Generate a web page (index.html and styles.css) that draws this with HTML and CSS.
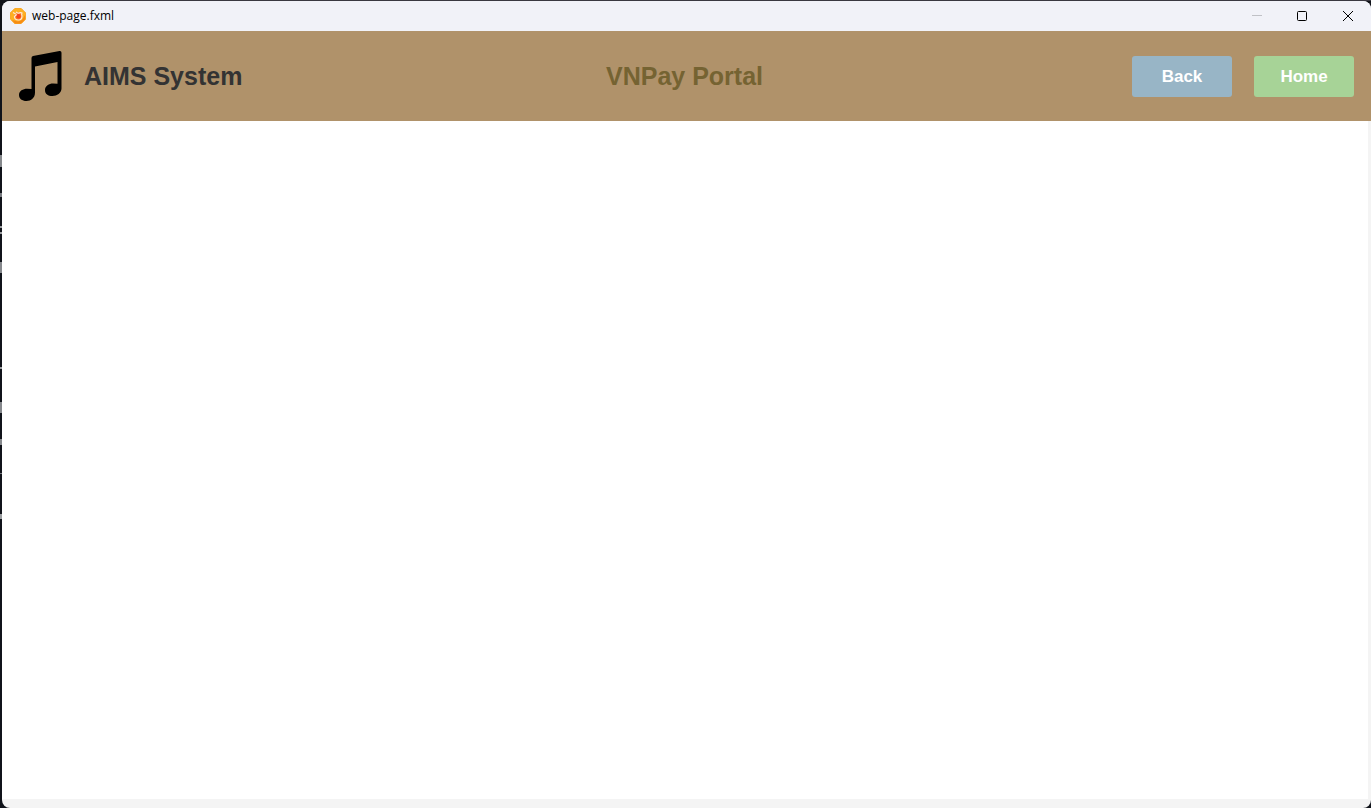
FILE: index.html
```html
<!DOCTYPE html>
<html lang="en">
<head>
<meta charset="utf-8">
<meta name="viewport" content="width=device-width, initial-scale=1">
<title>web-page.fxml</title>
<link rel="stylesheet" href="styles.css">
</head>
<body>
<div class="window">
  <div class="titlebar">
    <svg class="app-icon" viewBox="0 0 16 16" aria-hidden="true">
      <path d="M5 0.3h6L15.7 5v6L11 15.7H5L0.3 11V5z" fill="#fdb022" stroke="#fba21b" stroke-linejoin="round"/>
      <path d="M2 12l3 3.500h6l4-4V7l-3 5-4 1.500z" fill="#f78c14"/>
      <circle cx="8.300" cy="8.300" r="4" fill="#fb7a1c"/>
      <circle cx="8.500" cy="8.300" r="2.200" fill="#f4401e"/>
      <path d="M3 4.500L6.500 6.500M6 4l2 1.200Q11 4 12 5Q11.300 6 12 8Q12 12 8.500 12Q4.500 12 4.500 8.500L6.500 6.500" fill="none" stroke="#ffe8d8" stroke-width="1.200"/>
    </svg>
    <span class="window-title">web-page.fxml</span>
    <div class="window-controls">
      <button class="control minimize" aria-label="Minimize" disabled><svg viewBox="0 0 12 12"><path d="M2 5.500h10"/></svg></button>
      <button class="control" aria-label="Maximize"><svg viewBox="0 0 12 12"><rect x="1.500" y="1.500" width="9" height="9" rx="1"/></svg></button>
      <button class="control" aria-label="Close"><svg viewBox="0 0 12 12"><path d="M1 1l10 10M11 1L1 11"/></svg></button>
    </div>
  </div>
  <header class="header">
    <div class="brand">
      <svg class="logo" viewBox="0 0 44 52" aria-hidden="true">
        <path d="M12.500 8Q12.500 6.300 14 6L40.500 1Q42.500 0.700 42.500 2.700V38.500C42.500 43 38 46 33.500 46C29 46 26 44 26 40C26 36 30 33.500 34 33.500L38.500 33.800V12L16 16.500V42.500C16 48 12 51 7.500 51C3 51 0 48.800 0 45C0 41 4 38.800 8 38.800L12.500 39Z"/>
      </svg>
      <span class="brand-name">AIMS System</span>
    </div>
    <h1 class="page-title">VNPay Portal</h1>
    <nav class="actions">
      <button class="button back">Back</button>
      <button class="button home">Home</button>
    </nav>
  </header>
  <main class="content"><div class="web-view"></div></main>
</div>
</body>
</html>
```
FILE: styles.css
```css
* {
  box-sizing: border-box;
}

body {
  display: flex;
  min-height: 100vh;
  margin: 0;
  padding: 1px 0 0 2px;
  font-family: "Liberation Sans", Arial, sans-serif;
  background-color: #10131a;
  background-image:
    linear-gradient(#3a3840, #3a3840),
    linear-gradient(to bottom,
      transparent 155px, #85888c 155px 167px, transparent 167px 193px,
      #777a80 193px 197px, transparent 197px 226px, #9a9da0 226px 228px,
      transparent 228px 232px, #9a9da0 232px 234px, transparent 234px 262px,
      #85888c 262px 273px, transparent 273px 367px, #9a9da0 367px 369px,
      transparent 369px 402px, #85888c 402px 413px, transparent 413px 439px,
      #85888c 439px 445px, transparent 445px 473px, #777a80 473px 474px,
      transparent 474px 514px, #9a9da0 514px 519px, transparent 519px);
  background-size: 100% 1px, 2px 100%;
  background-position: 20px 0, 0 0;
  background-repeat: no-repeat;
}

.window {
  display: flex;
  flex: 1;
  flex-direction: column;
  overflow: hidden;
  background: #f4f4f4;
  border-radius: 8px;
}

.titlebar {
  display: flex;
  align-items: center;
  height: 30px;
  padding-left: 8px;
  background: #f1f2f8;
}

.app-icon {
  width: 16px;
  height: 16px;
  margin-right: 6px;
}

.window-title {
  flex: 1;
  font-family: "Open Sans", "Noto Sans", sans-serif;
  font-size: 12px;
  line-height: 16px;
  color: #000;
}

.window-controls {
  display: flex;
}

.control {
  display: flex;
  align-items: center;
  justify-content: center;
  width: 46px;
  height: 28px;
  padding: 0;
  background: none;
  border: 0;
}

.control svg {
  width: 12px;
  height: 12px;
  fill: none;
  stroke: #000;
}

.minimize svg {
  stroke: #c0c1c6;
}

.header {
  display: grid;
  grid-template-columns: 1fr auto 1fr;
  align-items: center;
  height: 90px;
  padding: 0 17px;
  background: #b0926a;
}

.brand {
  display: flex;
  align-items: center;
  gap: 21px;
}

.logo {
  width: 44px;
  height: 52px;
}

.brand-name {
  font-size: 25px;
  font-weight: bold;
  line-height: 32px;
  color: #333;
}

.page-title {
  margin: 0;
  padding-right: 4px;
  font-size: 25px;
  font-weight: bold;
  line-height: 32px;
  color: #756332;
}

.actions {
  display: flex;
  gap: 22px;
  justify-content: flex-end;
}

.button {
  width: 100px;
  height: 41px;
  padding: 2px 0 0;
  font-family: inherit;
  font-size: 17px;
  font-weight: bold;
  color: #fff;
  border: 0;
  border-radius: 3px;
}

.back {
  background: #98b5c6;
}

.home {
  background: #a7d397;
}

.content {
  display: flex;
  flex: 1;
  padding: 0 3px 9px 0;
}

.web-view {
  flex: 1;
  background: #fff;
}
```
